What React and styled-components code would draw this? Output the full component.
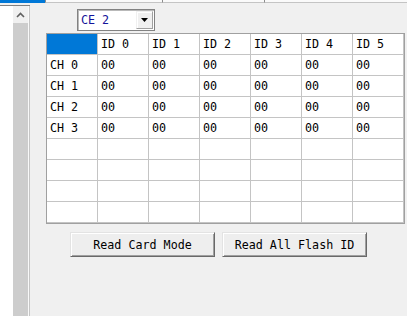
import React from "react";
import styled, { createGlobalStyle } from "styled-components";

const Global = createGlobalStyle`
  html, body {
    margin: 0;
    padding: 0;
    background: #f0f0f0;
    width: 407px;
    height: 316px;
    overflow: hidden;
  }
  body {
    font-family: "DejaVu Sans Mono", "Liberation Mono", monospace;
    font-size: 11.7px;
    color: #000;
  }
`;

const Window = styled.div`
  width: 407px;
  height: 316px;
  display: flex;
  flex-direction: column;
  background: #f0f0f0;
`;

const TopStrip = styled.div`
  display: flex;
  height: 3px;
`;

const StripSeg = styled.div`
  box-sizing: border-box;
  height: 3px;
  flex: ${(p) => (p.$grow ? "1" : `0 0 ${p.$w}px`)};
  background: ${(p) => (p.$active ? "#0078d7" : "#fafafa")};
  border-bottom: ${(p) => (p.$active ? "none" : "1px solid #c4c4c4")};
  border-left: ${(p) => (p.$active ? "none" : "1px solid #8c8c8c")};
`;

const Main = styled.div`
  display: flex;
  flex: 1;
`;

const SidePanel = styled.div`
  display: flex;
  width: 30px;
  margin-top: 2px;
  border-top: 1px solid #7f7f7f;
`;

const ListArea = styled.div`
  width: 13px;
  background: #fff;
`;

const ScrollBar = styled.div`
  width: 15px;
  display: flex;
  flex-direction: column;
  background: #f0f0f0;
`;

const ScrollUp = styled.div`
  height: 17px;
  display: flex;
  align-items: center;
  justify-content: center;
`;

const ScrollThumb = styled.div`
  flex: 1;
  background: #cdcdcd;
`;

const PanelEdge = styled.div`
  width: 1px;
  background: #f9f9f9;
  border-right: 1px solid #c6c6c6;
`;

const Content = styled.div`
  display: flex;
  flex-direction: column;
  align-items: flex-start;
  padding: 6px 0 0 16px;
`;

const ComboBox = styled.div`
  box-sizing: border-box;
  width: 78px;
  height: 22px;
  margin-left: 31px;
  display: flex;
  align-items: stretch;
  background: #fff;
  border: 1px solid #828282;
  box-shadow: inset 1px 1px 0 #b9b9b9;
`;

const ComboText = styled.div`
  flex: 1;
  padding-left: 3px;
  line-height: 20px;
  color: #13139a;
`;

const ComboButton = styled.div`
  box-sizing: border-box;
  width: 17px;
  margin: 1px 1px 1px 0;
  display: flex;
  align-items: center;
  justify-content: center;
  background: #f0f0f0;
  border-top: 1px solid #f0f0f0;
  border-left: 1px solid #f0f0f0;
  border-right: 1px solid #a0a0a0;
  border-bottom: 1px solid #a0a0a0;
  box-shadow: inset 1px 1px 0 #fff;
`;

const Grid = styled.div`
  margin-top: 2px;
  display: grid;
  grid-template-columns: repeat(7, 51px);
  grid-auto-rows: 21px;
  border: 1px solid #a0a0a0;
  background: #fff;
`;

const Cell = styled.div`
  box-sizing: border-box;
  border-right: 1px solid #c4c4c4;
  border-bottom: 1px solid #c4c4c4;
  padding-left: 3px;
  line-height: 20px;
  white-space: pre;
  background: ${(p) => (p.$selected ? "#0078d7" : "#fff")};
`;

const ButtonRow = styled.div`
  display: flex;
  gap: 7px;
  margin: 8px 0 0 24px;
`;

const Button = styled.button`
  box-sizing: border-box;
  width: 145px;
  height: 25px;
  padding: 0;
  font-family: inherit;
  font-size: 11.7px;
  color: #000;
  background: #eeeeee;
  border-style: solid;
  border-width: 1px;
  border-color: #e3e3e3 #696969 #696969 #e3e3e3;
  box-shadow: inset 1px 1px 0 #fff, inset -1px -1px 0 #a0a0a0;
`;

const cols = ["", "ID 0", "ID 1", "ID 2", "ID 3", "ID 4", "ID 5"];
const dataRows = ["CH 0", "CH 1", "CH 2", "CH 3"];
const emptyRows = 4;

export default function App() {
  return (
    <>
      <Global />
      <Window>
        <TopStrip>
          <StripSeg $active $w={45} />
          <StripSeg $w={117} />
          <StripSeg $w={102} />
          <StripSeg $grow />
        </TopStrip>
        <Main>
          <SidePanel>
            <ListArea />
            <ScrollBar>
              <ScrollUp>
                <svg width="9" height="6" viewBox="0 0 9 6">
                  <path d="M1 5 L4.5 1.5 L8 5" fill="none" stroke="#606060" strokeWidth="1.6" />
                </svg>
              </ScrollUp>
              <ScrollThumb />
            </ScrollBar>
            <PanelEdge />
          </SidePanel>
          <Content>
            <ComboBox>
              <ComboText>CE 2</ComboText>
              <ComboButton>
                <svg width="7" height="4" viewBox="0 0 7 4">
                  <path d="M0 0 L7 0 L3.5 4 Z" fill="#000" />
                </svg>
              </ComboButton>
            </ComboBox>
            <Grid>
              {cols.map((c, i) => (
                <Cell key={"h" + i} $selected={i === 0}>
                  {c}
                </Cell>
              ))}
              {dataRows.map((r) => (
                <React.Fragment key={r}>
                  <Cell>{r}</Cell>
                  {cols.slice(1).map((c) => (
                    <Cell key={r + c}>00</Cell>
                  ))}
                </React.Fragment>
              ))}
              {Array.from({ length: emptyRows }).map((_, ri) =>
                cols.map((c, ci) => <Cell key={"e" + ri + "-" + ci} />)
              )}
            </Grid>
            <ButtonRow>
              <Button>Read Card Mode</Button>
              <Button>Read All Flash ID</Button>
            </ButtonRow>
          </Content>
        </Main>
      </Window>
    </>
  );
}
